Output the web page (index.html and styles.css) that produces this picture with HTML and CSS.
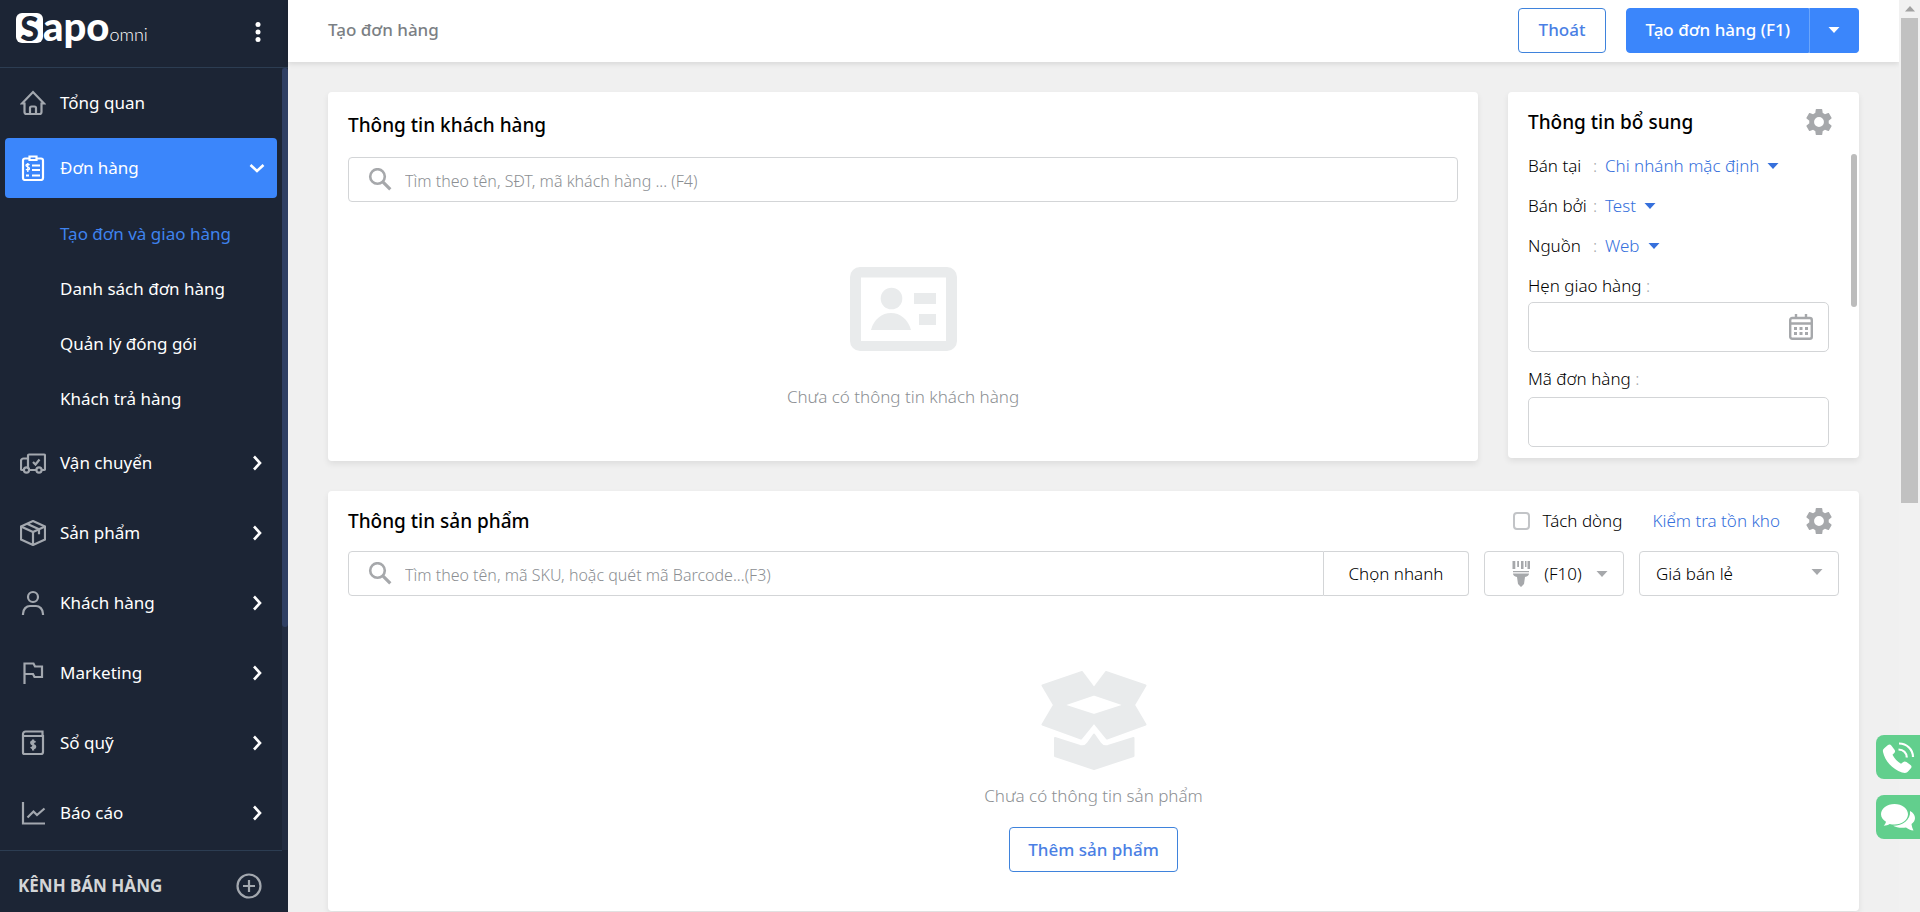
FILE: index.html
```html
<!DOCTYPE html>
<html lang="vi">
<head>
<meta charset="utf-8">
<meta name="viewport" content="width=device-width, initial-scale=1">
<title>Tạo đơn hàng</title>
<link rel="stylesheet" href="styles.css">
</head>
<body>
<svg class="defs" aria-hidden="true">
  <symbol id="chev" viewBox="0 0 16 16"><path d="M5 1.500l6 6.500-6 6.500" fill="none" stroke="currentColor" stroke-width="2.600"/></symbol>
  <symbol id="caret" viewBox="0 0 12 6"><path d="M0.500 0h11L6 6z" fill="currentColor"/></symbol>
  <symbol id="search" viewBox="0 0 24 24"><g fill="none" stroke="currentColor"><circle cx="9.500" cy="8.500" r="7.300" stroke-width="2.600"/><path d="M14.800 13.800l7.500 7.500" stroke-width="3.200"/></g></symbol>
  <symbol id="gear" viewBox="2 2 20 20"><path fill="currentColor" d="M19.430 12.980c.04-.32.07-.64.07-.98s-.03-.66-.07-.98l2.110-1.650c.19-.15.24-.42.12-.64l-2-3.460c-.12-.22-.39-.3-.61-.22l-2.490 1c-.52-.4-1.080-.73-1.690-.98l-.38-2.650C14.460 2.180 14.250 2 14 2h-4c-.25 0-.46.180-.49.420l-.38 2.650c-.61.250-1.170.590-1.690.980l-2.490-1c-.23-.09-.49 0-.61.220l-2 3.460c-.13.220-.07.490.12.640l2.110 1.650c-.04.320-.07.650-.07.980s.03.660.07.980l-2.110 1.650c-.19.150-.24.420-.12.640l2 3.460c.12.220.39.300.61.220l2.490-1c.52.400 1.080.730 1.690.980l.38 2.650c.03.240.24.420.49.420h4c.25 0 .46-.18.49-.42l.38-2.650c.61-.25 1.170-.59 1.690-.98l2.490 1c.23.090.49 0 .61-.22l2-3.460c.12-.22.07-.49-.12-.64l-2.110-1.650zM12 15.800a3.800 3.800 0 1 1 0-7.600 3.800 3.800 0 0 1 0 7.600z"/></symbol>
</svg>
<div class="app">
  <aside class="sidebar">
    <div class="brand">
      <a class="logo" href="#"><span class="logo-s">S</span><span class="logo-apo">apo</span><span class="logo-omni">omni</span></a>
      <button class="icon-btn dots" type="button" aria-label="Menu"><svg viewBox="0 0 6 20"><g fill="#fff"><circle cx="3" cy="2.500" r="2.500"/><circle cx="3" cy="10" r="2.500"/><circle cx="3" cy="17.500" r="2.500"/></g></svg></button>
    </div>
    <nav class="nav">
      <a class="item" href="#"><svg class="ico" viewBox="0 0 26 26"><path d="M2 13.500L13 2l11 11.500h-2.500V22a2 2 0 0 1-2 2h-13a2 2 0 0 1-2-2v-8.500zM10 24v-6a1.500 1.500 0 0 1 1.500-1.500h3A1.500 1.500 0 0 1 16 18v6"/></svg><span>Tổng quan</span></a>
      <a class="item active" href="#"><svg class="ico" viewBox="0 0 26 26"><path d="M9 3.500H5a2 2 0 0 0-2 2V23a2 2 0 0 0 2 2h16a2 2 0 0 0 2-2V5.500a2 2 0 0 0-2-2h-4M9.500 1.500h7v3.500h-7zM12 10.500h8M12 15h8M12 20.500h8M6 20.500h3"/><path stroke-width="1.300" d="M9.500 10C8.500 8.800 6 9 6 10.500s3.500 1.300 3.500 3S7 15.500 6 14.200M7.800 8v9"/></svg><span>Đơn hàng</span><svg class="chev down"><use href="#chev"/></svg></a>
      <div class="sub">
        <a class="current" href="#">Tạo đơn và giao hàng</a>
        <a href="#">Danh sách đơn hàng</a>
        <a href="#">Quản lý đóng gói</a>
        <a href="#">Khách trả hàng</a>
      </div>
      <a class="item" href="#"><svg class="ico" viewBox="0 0 26 26"><path d="M8 19V5.500a1 1 0 0 1 1-1h15a1 1 0 0 1 1 1V19a1 1 0 0 1-1 1h-2M16.500 20H9.500M8 8.500H3.500A2.500 2.500 0 0 0 1 11v8a1 1 0 0 0 1 1h1.500M13 12l2.500 2.500 4-5"/><circle cx="6.500" cy="20" r="2.600"/><circle cx="19" cy="20" r="2.600"/></svg><span>Vận chuyển</span><svg class="chev"><use href="#chev"/></svg></a>
      <a class="item" href="#"><svg class="ico" viewBox="0 0 26 26"><path d="M13 1L25 6.500v13L13 25 1 19.500v-13zM1 6.500L13 12l12-5.500M13 12v13M7 3.800l12 5.500v5"/></svg><span>Sản phẩm</span><svg class="chev"><use href="#chev"/></svg></a>
      <a class="item" href="#"><svg class="ico" viewBox="0 0 26 26"><circle cx="13" cy="7" r="5"/><path d="M3 25v-1c0-5 3.500-8 7-8h6c3.500 0 7 3 7 8v1"/></svg><span>Khách hàng</span><svg class="chev"><use href="#chev"/></svg></a>
      <a class="item" href="#"><svg class="ico" viewBox="0 0 26 26"><path d="M4.500 24V3.500h9l1.500 3h7V17h-7.500L13 14H4.500"/></svg><span>Marketing</span><svg class="chev"><use href="#chev"/></svg></a>
      <a class="item" href="#"><svg class="ico" viewBox="0 0 26 26"><path d="M22.500 6V1.500H5.500A2.500 2.500 0 0 0 3 4v18.500A1.500 1.500 0 0 0 4.500 24H21a2 2 0 0 0 2-2V6H4"/><path d="M15.200 12.500c-.8-1.600-4-1.400-4 .5s4 1.500 4 3.500-3.200 2.200-4.200.5M13.100 9.500v11"/></svg><span>Sổ quỹ</span><svg class="chev"><use href="#chev"/></svg></a>
      <a class="item" href="#"><svg class="ico" viewBox="0 0 26 26"><path d="M3 2v21.500h22M7.500 17.500l6-6 3.500 3.500L24.500 8.500"/></svg><span>Báo cáo</span><svg class="chev"><use href="#chev"/></svg></a>
      <div class="nav-track"><div class="nav-thumb"></div></div>
    </nav>
    <div class="channels">
      <span>KÊNH BÁN HÀNG</span>
      <button class="icon-btn plus" type="button" aria-label="Thêm kênh"><svg viewBox="0 0 26 26"><g fill="none" stroke="currentColor" stroke-width="2.200"><circle cx="13" cy="13" r="11.500"/><path d="M13 7v12M7 13h12"/></g></svg></button>
    </div>
  </aside>

  <div class="page">
    <header class="topbar">
      <h1>Tạo đơn hàng</h1>
      <button class="btn outline exit" type="button">Thoát</button>
      <div class="split">
        <button class="btn primary" type="button">Tạo đơn hàng (F1)</button>
        <button class="btn primary more" type="button" aria-label="Tùy chọn"><svg class="caret"><use href="#caret"/></svg></button>
      </div>
    </header>
    <main class="content">
      <div class="row">
        <section class="card customer">
          <h2>Thông tin khách hàng</h2>
          <label class="search">
            <svg><use href="#search"/></svg>
            <input type="text" aria-label="Tìm khách hàng" placeholder="Tìm theo tên, SĐT, mã khách hàng ... (F4)">
          </label>
          <div class="empty">
            <svg class="id-card" viewBox="0 0 107 84"><g fill="#e9ebec"><path fill-rule="evenodd" d="M10 0h87a10 10 0 0 1 10 10v64a10 10 0 0 1-10 10H10A10 10 0 0 1 0 74V10A10 10 0 0 1 10 0zm1 10.500V74h85V10.500z"/><circle cx="41.500" cy="31.500" r="10.800"/><path d="M21 63c3-11 11-17 20-17s17 6 20 17zM64 26h22v11H64zM69 47h17v11H69z"/></g></svg>
            <p>Chưa có thông tin khách hàng</p>
          </div>
        </section>
        <section class="card extra">
          <div class="card-head">
            <h2>Thông tin bổ sung</h2>
            <button class="icon-btn gear" type="button" aria-label="Cài đặt"><svg><use href="#gear"/></svg></button>
          </div>
          <div class="extra-body">
            <div class="pair"><span class="key">Bán tại</span><i>:</i><button class="drop" type="button">Chi nhánh mặc định<svg class="caret"><use href="#caret"/></svg></button></div>
            <div class="pair"><span class="key">Bán bởi</span><i>:</i><button class="drop" type="button">Test<svg class="caret"><use href="#caret"/></svg></button></div>
            <div class="pair"><span class="key">Nguồn</span><i>:</i><button class="drop" type="button">Web<svg class="caret"><use href="#caret"/></svg></button></div>
            <label class="field-label" for="due">Hẹn giao hàng <i>:</i></label>
            <div class="field">
              <input id="due" type="text">
              <svg viewBox="0 0 24 26"><g fill="none" stroke="#a6a8ab" stroke-width="2.400"><rect x="1.200" y="4" width="21.600" height="20.800" rx="2"/><path d="M1 9.500h22M7 0v4M17 0v4"/></g><path fill="#a6a8ab" d="M5 13h3v3H5zM10.500 13h3v3h-3zM16 13h3v3h-3zM5 18h3v3H5zM10.500 18h3v3h-3zM16 18h3v3h-3z"/></svg>
            </div>
            <label class="field-label code" for="code">Mã đơn hàng <i>:</i></label>
            <div class="field"><input id="code" type="text"></div>
          </div>
          <div class="extra-thumb"></div>
        </section>
      </div>

      <section class="card products">
        <div class="card-head">
          <h2>Thông tin sản phẩm</h2>
          <label class="check"><input type="checkbox">Tách dòng</label>
          <a class="stock" href="#">Kiểm tra tồn kho</a>
          <button class="icon-btn gear" type="button" aria-label="Cài đặt"><svg><use href="#gear"/></svg></button>
        </div>
        <div class="tools">
          <div class="group">
            <label class="search">
              <svg><use href="#search"/></svg>
              <input type="text" aria-label="Tìm sản phẩm" placeholder="Tìm theo tên, mã SKU, hoặc quét mã Barcode...(F3)">
            </label>
            <button class="quick" type="button">Chọn nhanh</button>
          </div>
          <button class="scan" type="button">
            <svg class="gun" viewBox="0 0 18 26"><path fill="currentColor" d="M0.500 0h2.800v8H.5zM5.200 0H7v6H5.200zM9 0h2.500v8H9zM13 0h1.500v6H13zM15.500 0H18v8h-2.500zM1 10h16v1.300H1zM1 12.500h16c0 2-1.500 3-4 3.500L12 23l-3 3-3-3-1-7C2.500 15.500 1 14.500 1 12.500z"/></svg>
            <span>(F10)</span><svg class="caret"><use href="#caret"/></svg>
          </button>
          <div class="price"><select aria-label="Bảng giá"><option>Giá bán lẻ</option></select><svg class="caret"><use href="#caret"/></svg></div>
        </div>
        <div class="empty">
          <svg class="box" viewBox="0 0 106 99"><g fill="#e9ebec" stroke="#e9ebec" stroke-width="2" stroke-linejoin="round"><path fill-rule="evenodd" d="M41 1L1.500 14.500 13 34 1.500 53.500 40 67.500 53 51.500 66 67.500 104.500 53.500 93 34 104.500 14.500 65 1 53 17zM53 23.500L84 34 53 44 22 34z"/><path d="M14 67l25 8c4 1 6 0 8-3l6-8.500L59 72c2 3 4 4 8 3l25.500-8v18L53 98 14 85z"/></g></svg>
          <p>Chưa có thông tin sản phẩm</p>
          <button class="btn outline" type="button">Thêm sản phẩm</button>
        </div>
      </section>
    </main>
  </div>

  <div class="scrollbar"><svg viewBox="0 0 10 6"><path d="M0 5.500L5 0l5 5.500z" fill="#a2a2a2"/></svg><div class="scroll-thumb"></div></div>
  <div class="float">
    <button type="button" aria-label="Gọi điện"><svg viewBox="0 0 44 44"><path fill="#fff" d="M8.500 13l3.500-3c1.500-1 2.500-.5 3.500.7l3 4c1 1.500.7 2.300-.5 3.500l-1.500 1.600c2 4 5 7 8.500 9l2-1.600c1.300-1 2.200-1 3.500-.2l4 3c1.300 1 1.300 2 .4 3.300L32 36.500c-1 1.500-3 1.700-6 1C16 34 9 26 7 17c-.3-1.700 0-2.800 1.500-4z"/><path fill="none" stroke="#fff" stroke-width="2.200" d="M23 8.500c8 0 14 6 14 13.500M22.500 14.500c5 .2 8 3.500 8.300 8"/></svg></button>
    <button type="button" aria-label="Trò chuyện"><svg viewBox="0 0 44 44"><path fill="#fff" d="M18.500 9C26 9 32 13.500 32 19.300S26 29.500 18.500 29.500c-1.700 0-3.300-.2-4.800-.6-1.700 1-3.700 1.700-6 1.800 1.300-1.200 2-2.500 2.300-3.900C7 25 5 22.300 5 19.300 5 13.500 11 9 18.500 9z"/><path fill="#fff" d="M34 16c3 1.600 5 4.200 5 7 0 2.500-1.500 4.500-3.500 6 .3 2.500 1 4.500 2 6.500-3 0-5.500-1.500-7.500-3-5 1-10-.2-13-1.700C26 31 35 25 34 16z"/></svg></button>
  </div>
</div>
</body>
</html>
```
FILE: styles.css
```css
* { box-sizing: border-box; }

body {
  margin: 0;
  background: #f0f0f0;
  color: #000;
  font-family: "Noto Sans", "Open Sans", sans-serif;
  font-size: 17px;
  line-height: 24px;
}

button, input, select { font: inherit; color: inherit; }
button { cursor: pointer; }
a { text-decoration: none; color: inherit; }
h1, h2, p { margin: 0; }
i { font-style: normal; color: #a6a8ab; }

.defs { position: absolute; width: 0; height: 0; }

.app { display: flex; height: 100vh; overflow: hidden; }

.icon-btn { display: flex; padding: 0; border: 0; background: none; }
.caret { width: 12px; height: 6px; flex: none; }

/* Sidebar */
.sidebar {
  display: flex;
  flex-direction: column;
  flex: none;
  width: 288px;
  background: #1c2535;
  color: #fff;
}

.brand {
  display: flex;
  align-items: flex-start;
  justify-content: space-between;
  height: 68px;
  padding: 12px 27px 0 16px;
  border-bottom: 1px solid #2c3d52;
}

.logo { display: flex; align-items: baseline; font-family: Lato, sans-serif; }
.logo-s {
  width: 27px;
  border-radius: 6px;
  background: #fff;
  color: #1c2535;
  font-size: 34px;
  font-weight: 900;
  line-height: 30px;
  text-align: center;
}
.logo-apo { font-size: 40px; font-weight: 900; line-height: 28px; }
.logo-omni { font-size: 18px; font-weight: 300; line-height: 28px; }

.dots { margin-top: 10px; }
.dots svg { width: 6px; height: 20px; }

.nav { position: relative; flex: 1; min-height: 0; overflow: hidden; }

.item {
  display: flex;
  align-items: center;
  gap: 14px;
  height: 70px;
  margin: 0 11px 0 5px;
  padding: 0 12px 0 15px;
}
.item span { flex: 1; }
.item.active { height: 60px; border-radius: 4px; background: #3b86fb; }

.ico {
  width: 26px;
  height: 26px;
  fill: none;
  stroke: #a3a8af;
  stroke-width: 2.2;
}
.active .ico { stroke: #fff; }

.chev { width: 16px; height: 16px; }
.down { transform: rotate(90deg); }

.sub { display: flex; flex-direction: column; padding: 8px 0 2px 60px; }
.sub a { line-height: 55px; }
.sub .current { color: #3f83ee; }

.nav-track { position: absolute; top: 0; right: 0; bottom: 0; width: 6px; background: #222c40; }
.nav-thumb { height: 71.5%; border-radius: 3px; background: #2f3f63; }

.channels {
  display: flex;
  align-items: center;
  justify-content: space-between;
  height: 62px;
  margin-right: 6px;
  padding: 9px 20px 0 18px;
  border-top: 1px solid #2c3d52;
  color: #d3d5d7;
  font-weight: 700;
}
.plus { color: #a3a8af; }
.plus svg { width: 26px; height: 26px; }

/* Page */
.page { display: flex; flex-direction: column; flex: 1; min-width: 0; }

.topbar {
  display: flex;
  align-items: center;
  gap: 20px;
  height: 62px;
  padding: 0 40px 2px;
  background: #fff;
  box-shadow: 0 2px 5px rgba(0, 0, 0, 0.1);
}
.topbar h1 { flex: 1; color: #7b7f84; font-size: 17px; font-weight: 500; }

.btn {
  height: 45px;
  padding: 0 18px;
  border: 1px solid #3f83dc;
  border-radius: 4px;
  font-weight: 500;
}
.exit { padding: 0 20px; }
.outline { background: #fff; color: #4a7fe4; }
.primary { border-color: #3b86fb; background: #3b86fb; color: #fff; }
.split { display: flex; }
.split .btn:first-child { border-radius: 4px 0 0 4px; }
.split .more { width: 50px; border-left-color: #6aa5fb; border-radius: 0 4px 4px 0; }
.more .caret { display: block; margin: 0 auto; }

.content {
  display: flex;
  flex-direction: column;
  gap: 30px;
  flex: 1;
  min-height: 0;
  padding: 30px 40px 1px;
}
.row { display: flex; align-items: flex-start; gap: 30px; }

.card {
  padding: 20px;
  border-radius: 4px;
  background: #fff;
  box-shadow: 0 3px 6px rgba(0, 0, 0, 0.08);
}
.card h2 { font-size: 19px; font-weight: 500; line-height: 26px; }

.customer { flex: 1; display: flex; flex-direction: column; }
.customer .search { margin-top: 19px; }

.search {
  display: flex;
  align-items: center;
  gap: 13px;
  height: 45px;
  padding-left: 19px;
  border: 1px solid #d3d5d7;
  border-radius: 4px;
}
.search svg { width: 24px; height: 24px; color: #a6a8ab; }
.search input { flex: 1; min-width: 0; padding: 2px 0 0; border: 0; outline: 0; background: none; font-size: 16px; }
.search input::placeholder { color: #8c8f93; font-weight: 300; }

.empty { display: flex; flex-direction: column; align-items: center; color: #8c8f93; font-weight: 300; }
.customer .empty { gap: 34px; padding: 65px 0 32px; }
.id-card { width: 107px; height: 84px; }

.card-head { display: flex; align-items: center; }
.card-head h2 { flex: 1; }
.gear { color: #a6a8ab; }
.gear svg { width: 26px; height: 26px; }

.extra { position: relative; width: 351px; height: 366px; padding: 17px 30px 0 20px; }
.extra .gear { margin-right: -3px; }
.extra-body { padding-top: 11px; font-weight: 300; }
.pair { display: flex; align-items: center; height: 40px; }
.key { width: 65px; }
.pair i { width: 12px; }
.drop {
  display: flex;
  align-items: center;
  gap: 8px;
  padding: 0;
  border: 0;
  background: none;
  color: #3670dc;
  font-weight: 300;
}
.field-label { display: block; padding: 8px 0 4px; }
.field-label.code { padding: 15px 0 6px; }
.field { display: flex; align-items: center; height: 50px; padding-right: 15px; border: 1px solid #d3d5d7; border-radius: 5px; }
.field input { flex: 1; min-width: 0; height: 100%; padding: 0 12px; border: 0; outline: 0; background: none; }
.field svg { width: 24px; height: 26px; }
.extra-thumb { position: absolute; top: 62px; right: 2px; width: 6px; height: 153px; border-radius: 3px; background: #bcbcbc; }

.products { flex: 1; padding-top: 17px; }
.check { display: flex; align-items: center; gap: 12px; margin-right: 30px; font-weight: 300; }
.check input {
  appearance: none;
  width: 17px;
  height: 18px;
  margin: 0;
  border: 2px solid #c2c4c7;
  border-radius: 4px;
}
.stock { margin-right: 26px; color: #3670dc; font-weight: 300; }
.products .gear { margin-right: 7px; }

.tools { display: flex; gap: 15px; margin-top: 17px; font-weight: 300; }
.group { display: flex; flex: 1; min-width: 0; }
.group .search { flex: 1; border-radius: 4px 0 0 4px; }
.quick, .scan { height: 45px; border: 1px solid #d3d5d7; border-radius: 4px; background: #fff; font-weight: 300; }
.quick { width: 145px; padding: 0; border-left: 0; border-radius: 0 4px 4px 0; }
.scan { display: flex; align-items: center; gap: 12px; width: 140px; padding: 0 15px 0 27px; }
.scan span { flex: 1; }
.scan .gun { width: 18px; height: 26px; flex: none; color: #a6a8ab; }
.scan .caret, .price .caret { color: #a6a8ab; }
.price { position: relative; width: 200px; }
.price select {
  appearance: none;
  width: 100%;
  height: 45px;
  padding: 0 40px 0 16px;
  border: 1px solid #d3d5d7;
  border-radius: 4px;
  background: #fff;
}
.price .caret { position: absolute; top: 18px; right: 16px; }

.products .empty { padding-top: 75px; }
.box { width: 106px; height: 99px; }
.products .empty p { margin: 14px 0 19px; }

/* Window scrollbar and floating contacts */
.scrollbar { flex: none; width: 21px; padding: 6px 2px 0; background: #f1f1f1; }
.scrollbar svg { display: block; width: 10px; height: 6px; margin: 0 auto 6px; }
.scroll-thumb { width: 17px; height: 53.5%; background: #c1c1c1; }

.float { position: fixed; right: 0; bottom: 73px; display: flex; flex-direction: column; gap: 16px; }
.float button { width: 44px; height: 44px; padding: 0; border: 0; border-radius: 8px 0 0 8px; background: #62cf8d; }
.float svg { display: block; width: 44px; height: 44px; }
```
